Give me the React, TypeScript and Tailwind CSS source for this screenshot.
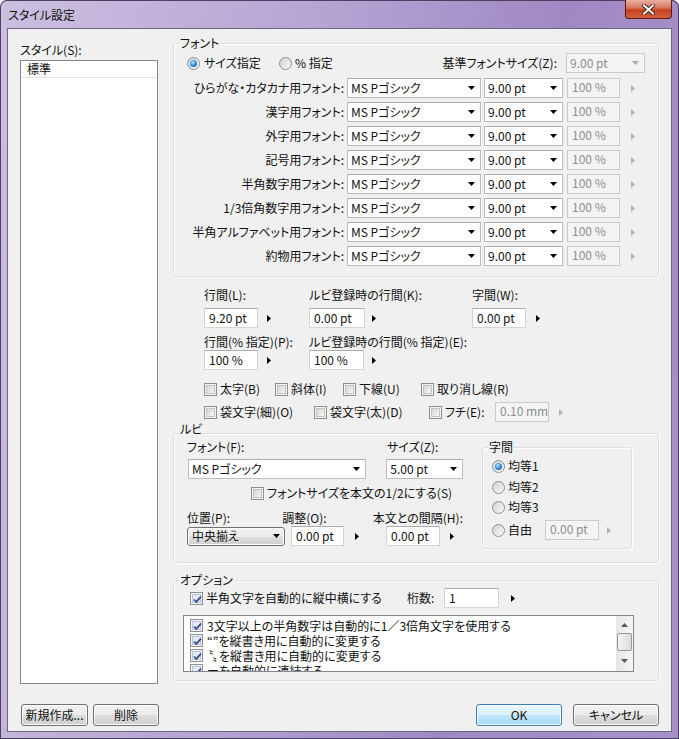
import React from 'react'

function DownTri({ gray }: { gray?: boolean }) {
  return (
    <svg width="7" height="4" viewBox="0 0 7 4">
      <path d="M0 0h7L3.5 4z" fill={gray ? '#a9a9a9' : '#000'} />
    </svg>
  )
}

function RightTri({ gray }: { gray?: boolean }) {
  return (
    <svg width="4" height="7" viewBox="0 0 4 7">
      <path d="M0 0l4 3.5L0 7z" fill={gray ? '#b4b4b4' : '#000'} />
    </svg>
  )
}

function Combo({ text, className, disabled }: { text: string; className?: string; disabled?: boolean }) {
  return (
    <div
      className={`flex h-[20px] items-center border ${
        disabled ? 'border-[#cacaca] bg-[#f4f4f4] text-[#8d8d8d]' : 'border-[#bdbdbd] border-t-[#abadb3] bg-white'
      } ${className ?? ''}`}
    >
      <span className="flex-1 whitespace-nowrap pl-[3px]">{text}</span>
      <span className="flex w-[17px] justify-center">
        <DownTri gray={disabled} />
      </span>
    </div>
  )
}

function TextBox({ text, className, disabled }: { text: string; className?: string; disabled?: boolean }) {
  return (
    <div
      className={`flex h-[20px] whitespace-nowrap border pl-[4px] ${
        disabled
          ? 'items-start border-[#cbcbcb] bg-[#f4f4f4] pt-[1px] text-[#8d8d8d]'
          : 'items-center border-[#d2d4da] border-t-[#abadb3] bg-white'
      } ${className ?? ''}`}
    >
      {text}
    </div>
  )
}

function Check({ checked, label, className }: { checked?: boolean; label?: string; className?: string }) {
  return (
    <div className={`flex items-center ${className ?? ''}`}>
      <span className="relative flex h-[13px] w-[13px] shrink-0 items-center justify-center border border-[#8e8f8f] bg-[#f4f4f4]">
        <span
          className={`h-[9px] w-[9px] border ${
            checked ? 'border-[#b7c2d6] bg-[#e4ebf6]' : 'border-[#c3c3c3] bg-gradient-to-br from-[#d5d5d5] to-[#f7f7f7]'
          }`}
        />
        {checked && (
          <svg className="absolute left-[1px] top-[1px]" width="11" height="11" viewBox="0 0 11 11">
            <path d="M2 5.5l2.3 2.4L9 2.6" fill="none" stroke="#3b4f8e" strokeWidth="1.8" />
          </svg>
        )}
      </span>
      {label && <span className="ml-[3px] whitespace-nowrap">{label}</span>}
    </div>
  )
}

function Radio({ checked }: { checked?: boolean }) {
  return (
    <span className="flex h-[13px] w-[13px] shrink-0 items-center justify-center rounded-full border border-[#8e8f8f] bg-gradient-to-br from-[#d0d0d0] to-[#fbfbfb]">
      {checked && (
        <span className="h-[7px] w-[7px] rounded-full bg-[radial-gradient(circle_at_40%_35%,#b6e6ff,#2585d6_55%,#0e4f92)]" />
      )}
    </span>
  )
}

function Group({
  label,
  className,
  labelClass,
  children,
}: {
  label: string
  className?: string
  labelClass?: string
  children: React.ReactNode
}) {
  return (
    <div
      className={`relative rounded-[3px] border border-[#d5dfe5] shadow-[inset_1px_1px_0_#ffffff,1px_1px_0_#ffffff] ${className ?? ''}`}
    >
      <span className={`absolute left-[5px] bg-[#f0f0f0] px-[1px] leading-[14px] ${labelClass ?? 'top-[-8px]'}`}>
        {label}
      </span>
      {children}
    </div>
  )
}

function Btn({ children, className, primary }: { children: React.ReactNode; className?: string; primary?: boolean }) {
  return (
    <div
      className={`flex h-[22px] items-center justify-center rounded-[3px] border shadow-[inset_0_0_0_1px_#fcfcfc] ${
        primary
          ? 'border-[#3c7fb1] bg-[linear-gradient(#eaf6fd_0%,#d9f0fc_50%,#bee6fd_50%,#a7d9f5_100%)]'
          : 'border-[#707070] bg-[linear-gradient(#f2f2f2_0%,#ebebeb_50%,#dddddd_50%,#cfcfcf_100%)]'
      } ${className ?? ''}`}
    >
      {children}
    </div>
  )
}

const fontRows = [
  'ひらがな・カタカナ用フォント:',
  '漢字用フォント:',
  '外字用フォント:',
  '記号用フォント:',
  '半角数字用フォント:',
  '1/3倍角数字用フォント:',
  '半角アルファベット用フォント:',
  '約物用フォント:',
]

const optionItems = [
  '3文字以上の半角数字は自動的に1／3倍角文字を使用する',
  '“”を縦書き用に自動的に変更する',
  '〝〟を縦書き用に自動的に変更する',
  'ーを自動的に連結する',
]

export default function App() {
  return (
    <div className="h-[739px] w-[679px] overflow-hidden rounded-t-[7px] bg-[linear-gradient(100deg,#cbc0e0_0%,#b6a4d4_40%,#a088c4_70%,#a891ca_100%)] font-['Noto_Sans_CJK_JP',sans-serif] text-[12px] leading-[14px] text-[#111] shadow-[inset_0_0_0_1px_#4a4060] [font-feature-settings:'palt']">
      {/* Title bar */}
      <div className="flex h-[28px] items-start">
        <span className="ml-[8px] mt-[8px] text-[12px]">スタイル設定</span>
        <div className="ml-auto mr-[7px] flex h-[19px] w-[47px] items-center justify-center rounded-b-[4px] border border-t-0 border-[#5b1d12] bg-[linear-gradient(#eab0a2_0%,#d9735c_45%,#c8401f_55%,#d2603f_100%)]">
          <svg width="13" height="11" viewBox="0 0 13 11">
            <path d="M2 1.5l9 8M11 1.5l-9 8" stroke="#3d1a14" strokeWidth="3.8" strokeLinecap="square" />
            <path d="M2 1.5l9 8M11 1.5l-9 8" stroke="#fff" strokeWidth="2" strokeLinecap="square" />
          </svg>
        </div>
      </div>

      {/* Client area */}
      <div className="ml-[7px] flex h-[704px] w-[665px] flex-col border border-[#6c687c] bg-[#f0f0f0]">
        <div className="flex h-[655px]">
          {/* Style list */}
          <div className="ml-[12px] w-[138px] pt-[14px]">
            <div>スタイル(S):</div>
            <div className="mt-[3px] h-[624px] border border-[#828790] bg-white">
              <div className="flex h-[17px] items-center border-b border-[#e4e4e4] pl-[6px]">標準</div>
            </div>
          </div>

          {/* Right side */}
          <div className="ml-[15px] w-[486px] pt-[14px]">
            <Group label="フォント" className="h-[234px]">
              <div className="mt-[9px] flex h-[20px] items-center">
                <div className="ml-[13px] flex w-[92px] items-center">
                  <Radio checked />
                  <span className="ml-[4px]">サイズ指定</span>
                </div>
                <div className="flex items-center">
                  <Radio />
                  <span className="ml-[3px]">% 指定</span>
                </div>
                <span className="ml-auto">基準フォントサイズ(Z):</span>
                <Combo disabled className="ml-[9px] mr-[13px] w-[79px]" text="9.00 pt" />
              </div>
              <div className="mt-[5px] flex flex-col gap-[4px]">
                {fontRows.map((row) => (
                  <div key={row} className="flex h-[20px] items-center">
                    <span className="w-[170px] whitespace-nowrap text-right">{row}</span>
                    <Combo className="ml-[3px] w-[134px]" text="MS Pゴシック" />
                    <Combo className="ml-[3px] w-[79px]" text="9.00 pt" />
                    <TextBox disabled className="ml-[4px] w-[53px]" text="100 %" />
                    <span className="ml-[11px] flex">
                      <RightTri gray />
                    </span>
                  </div>
                ))}
              </div>
            </Group>

            {/* Line spacing */}
            <div className="mt-[11px] flex pl-[31px]">
              <div className="w-[105px]">
                <div className="whitespace-nowrap">行間(L):</div>
                <div className="mt-[6px] flex items-center">
                  <TextBox className="w-[54px]" text="9.20 pt" />
                  <span className="ml-[9px] flex">
                    <RightTri />
                  </span>
                </div>
                <div className="mt-[7px] whitespace-nowrap">行間(% 指定)(P):</div>
                <div className="mt-[1px] flex items-center">
                  <TextBox className="w-[54px]" text="100 %" />
                  <span className="ml-[9px] flex">
                    <RightTri />
                  </span>
                </div>
              </div>
              <div className="w-[163px]">
                <div className="whitespace-nowrap">ルビ登録時の行間(K):</div>
                <div className="mt-[6px] flex items-center">
                  <TextBox className="w-[56px]" text="0.00 pt" />
                  <span className="ml-[7px] flex">
                    <RightTri />
                  </span>
                </div>
                <div className="mt-[7px] whitespace-nowrap">ルビ登録時の行間(% 指定)(E):</div>
                <div className="mt-[1px] flex items-center">
                  <TextBox className="w-[55px]" text="100 %" />
                  <span className="ml-[8px] flex">
                    <RightTri />
                  </span>
                </div>
              </div>
              <div>
                <div className="whitespace-nowrap">字間(W):</div>
                <div className="mt-[6px] flex items-center">
                  <TextBox className="w-[54px]" text="0.00 pt" />
                  <span className="ml-[10px] flex">
                    <RightTri />
                  </span>
                </div>
              </div>
            </div>

            {/* Decorations */}
            <div className="mt-[12px] flex h-[14px] items-center pl-[31px]">
              <Check className="w-[71px]" label="太字(B)" />
              <Check className="w-[68px]" label="斜体(I)" />
              <Check className="w-[78px]" label="下線(U)" />
              <Check label="取り消し線(R)" />
            </div>
            <div className="mt-[5px] flex h-[22px] items-center pl-[31px]">
              <Check className="w-[110px]" label="袋文字(細)(O)" />
              <Check className="w-[115px]" label="袋文字(太)(D)" />
              <Check className="w-[66px]" label="フチ(E):" />
              <TextBox disabled className="w-[54px]" text="0.10 mm" />
              <span className="ml-[10px] flex">
                <RightTri gray />
              </span>
            </div>

            {/* Ruby */}
            <Group label="ルビ" labelClass="top-[-12px]" className="mt-[10px] h-[130px]">
              <div className="flex items-start pt-[6px]">
                <div className="ml-[13px] w-[276px]">
                  <div className="flex">
                    <span className="w-[200px]">フォント(F):</span>
                    <span>サイズ(Z):</span>
                  </div>
                  <div className="mt-[5px] flex">
                    <Combo className="ml-[1px] w-[179px]" text="MS Pゴシック" />
                    <Combo className="ml-[20px] w-[77px]" text="5.00 pt" />
                  </div>
                  <div className="mt-[7px] flex h-[14px] items-center pl-[64px]">
                    <Check label="フォントサイズを本文の1/2にする(S)" />
                  </div>
                  <div className="mt-[11px] flex">
                    <span className="w-[102px]">位置(P):</span>
                    <span className="w-[97px]">調整(O):</span>
                    <span className="whitespace-nowrap">本文との間隔(H):</span>
                  </div>
                  <div className="mt-[1px] flex items-center">
                    <div className="w-[102px]">
                      <div className="flex h-[19px] w-[98px] items-center rounded-[3px] border border-[#707070] bg-[linear-gradient(#f2f2f2_0%,#ebebeb_50%,#dddddd_50%,#cfcfcf_100%)] shadow-[inset_0_0_0_1px_#fcfcfc]">
                        <span className="flex-1 pl-[4px]">中央揃え</span>
                        <span className="flex w-[16px] justify-center">
                          <DownTri />
                        </span>
                      </div>
                    </div>
                    <div className="flex w-[97px] items-center">
                      <TextBox className="ml-[2px] w-[53px]" text="0.00 pt" />
                      <span className="ml-[11px] flex">
                        <RightTri />
                      </span>
                    </div>
                    <div className="flex items-center">
                      <TextBox className="w-[54px]" text="0.00 pt" />
                      <span className="ml-[10px] flex">
                        <RightTri />
                      </span>
                    </div>
                  </div>
                </div>

                <Group label="字間" className="ml-[19px] mt-[7px] h-[102px] w-[150px]">
                  <div className="flex flex-col pl-[9px] pt-[11px]">
                    <div className="flex h-[14px] items-center">
                      <Radio checked />
                      <span className="ml-[3px]">均等1</span>
                    </div>
                    <div className="mt-[7px] flex h-[14px] items-center">
                      <Radio />
                      <span className="ml-[3px]">均等2</span>
                    </div>
                    <div className="mt-[6px] flex h-[14px] items-center">
                      <Radio />
                      <span className="ml-[3px]">均等3</span>
                    </div>
                    <div className="mt-[6px] flex h-[20px] items-center">
                      <div className="flex w-[53px] items-center">
                        <Radio />
                        <span className="ml-[3px]">自由</span>
                      </div>
                      <TextBox disabled className="w-[54px]" text="0.00 pt" />
                      <span className="ml-[8px] flex">
                        <RightTri gray />
                      </span>
                    </div>
                  </div>
                </Group>
              </div>
            </Group>

            {/* Options */}
            <Group label="オプション" className="mt-[17px] h-[101px]">
              <div className="mt-[7px] flex h-[20px] items-center">
                <Check checked className="ml-[16px] w-[217px]" label="半角文字を自動的に縦中横にする" />
                <span className="w-[37px]">桁数:</span>
                <TextBox className="w-[55px]" text="1" />
                <span className="ml-[12px] flex">
                  <RightTri />
                </span>
              </div>
              <div className="ml-[9px] mt-[7px] flex h-[57px] w-[451px] border border-[#828790] bg-white">
                <div className="flex-1 overflow-hidden pt-[2px]">
                  {optionItems.map((item) => (
                    <div key={item} className="flex h-[15px] items-center pl-[6px]">
                      <Check checked />
                      <span className="ml-[4px] whitespace-nowrap">{item}</span>
                    </div>
                  ))}
                </div>
                <div className="flex w-[17px] flex-col bg-[linear-gradient(90deg,#e6e6e6,#f6f6f6)]">
                  <div className="flex h-[17px] items-center justify-center">
                    <svg width="7" height="4" viewBox="0 0 7 4">
                      <path d="M0 4L3.5 0 7 4z" fill="#5a5a5a" />
                    </svg>
                  </div>
                  <div className="mx-[1px] h-[18px] rounded-[2px] border border-[#979797] bg-[linear-gradient(90deg,#f3f3f3,#dcdcdc)]" />
                  <div className="flex flex-1 items-center justify-center">
                    <svg width="7" height="4" viewBox="0 0 7 4">
                      <path d="M0 0h7L3.5 4z" fill="#5a5a5a" />
                    </svg>
                  </div>
                </div>
              </div>
            </Group>
          </div>
        </div>

        {/* Bottom buttons */}
        <div className="mt-[20px] flex h-[22px]">
          <Btn className="ml-[13px] w-[67px]">新規作成...</Btn>
          <Btn className="ml-[5px] w-[66px]">削除</Btn>
          <Btn primary className="ml-auto w-[86px]">OK</Btn>
          <Btn className="ml-[11px] mr-[12px] w-[86px]">キャンセル</Btn>
        </div>
      </div>
    </div>
  )
}
